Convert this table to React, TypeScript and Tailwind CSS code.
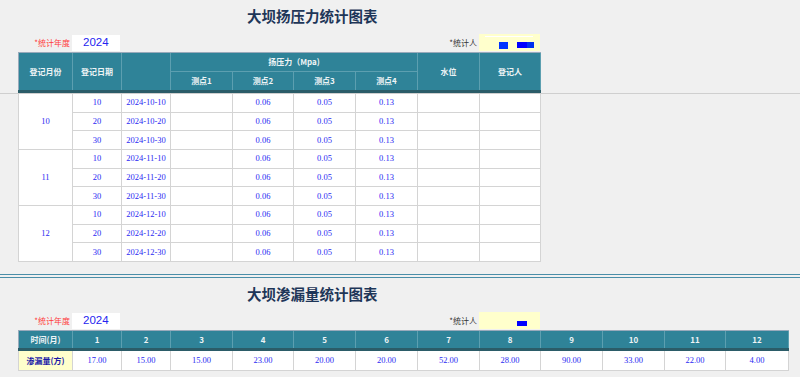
import React from "react";

const cjk = "font-['Noto_Sans_CJK_SC','Noto_Sans',sans-serif]";
const serif = "font-['Liberation_Serif','DejaVu_Serif',serif]";

const rows = [
  { m: "10", d: ["10", "20", "30"] },
  { m: "11", d: ["10", "20", "30"] },
  { m: "12", d: ["10", "20", "30"] },
];

const seep = ["17.00", "15.00", "15.00", "23.00", "20.00", "20.00", "52.00", "28.00", "90.00", "33.00", "22.00", "4.00"];

const cols1 = "grid-cols-[53px_48px_48px_61px_60px_61px_61px_61px_60px]";
const cols2 =
  "grid-cols-[53px_48px_48px_61px_60px_61px_61px_61px_60px_61px_61px_60px_62px]";

function Title({ children }: { children: React.ReactNode }) {
  return (
    <div className="flex h-[33px] items-center pl-[247px]">
      <h1 className={`${cjk} text-[14.5px] font-bold leading-none text-[#1e3658]`}>{children}</h1>
    </div>
  );
}

function FormRow({ width, marks }: { width: number; marks: "a" | "b" }) {
  return (
    <div className="flex h-[19px] items-center" style={{ width }}>
      <span className={`${cjk} w-[71px] pr-[1px] text-right text-[8px] text-[#ff3b3b]`}>*统计年度</span>
      <div className="ml-[1px] flex h-[16px] w-[48px] items-center bg-white pl-[11px] font-['Liberation_Sans',sans-serif] text-[11.5px] text-[#2424f0]">
        2024
      </div>
      <div className={`${cjk} flex-1 pr-[2px] text-right text-[8px] text-[#333]`}>*统计人</div>
      <div className="relative h-[17px] w-[61px] bg-[#ffffcc]">
        {marks === "a" ? (
          <>
            <span className="absolute left-[6px] top-[2px] h-px w-[48px] bg-white" />
            <span className="absolute left-[20px] top-[8px] h-[7px] w-[9px] bg-[#0033ff]" />
            <span className="absolute left-[38px] top-[8px] h-[6px] w-[10px] bg-[#0000ff]" />
            <span className="absolute left-[48px] top-[8px] h-[6px] w-[7px] bg-[#0030ee]" />
          </>
        ) : (
          <span className="absolute left-[38px] top-[9px] h-[5px] w-[10px] bg-[#0000ff]" />
        )}
      </div>
    </div>
  );
}

function H({ children, className = "" }: { children?: React.ReactNode; className?: string }) {
  return (
    <div className={`${cjk} flex items-center justify-center bg-[#2f8398] text-[8px] font-bold text-[#eef4f6] ${className}`}>
      {children}
    </div>
  );
}

function C({ children, className = "" }: { children?: React.ReactNode; className?: string }) {
  return (
    <div className={`${serif} flex items-center justify-center bg-white text-[8.5px] text-[#2a2af2] ${className}`}>
      {children}
    </div>
  );
}

export default function App() {
  return (
    <div className="h-[377px] w-[800px] overflow-hidden bg-[#f0f0f0]">
      {/* 扬压力 */}
      <Title>大坝扬压力统计图表</Title>
      <FormRow width={540} marks="a" />
      <div className="pl-[18px]">
        <div className={`grid w-[523px] ${cols1} grid-rows-[18px_18px] gap-px border-l border-t border-[#9ab] bg-[#5c9fb0] pr-px`}>
          <H className="row-span-2">登记月份</H>
          <H className="row-span-2">登记日期</H>
          <H className="row-span-2" />
          <H className="col-span-4">扬压力（Mpa)</H>
          <H className="row-span-2">水位</H>
          <H className="row-span-2">登记人</H>
          <H>测点1</H>
          <H>测点2</H>
          <H>测点3</H>
          <H>测点4</H>
        </div>
        <div className="h-[3px] w-[523px] bg-[#2b5c68]" />
      </div>
      <div className="h-px w-full bg-[#cfcfcf]" />
      <div className="pl-[18px]">
        <div className={`grid h-[168px] w-[523px] ${cols1} grid-rows-9 gap-px bg-[#d4d4d4] px-px pb-px`}>
          {rows.map((r) =>
            r.d.map((d, i) => (
              <React.Fragment key={r.m + d}>
                {i === 0 && <C className="row-span-3">{r.m}</C>}
                <C>{d}</C>
                <C>{`2024-${r.m}-${d}`}</C>
                <C />
                <C>0.06</C>
                <C>0.05</C>
                <C>0.13</C>
                <C />
                <C />
              </React.Fragment>
            ))
          )}
        </div>
      </div>

      <div className="mt-[12px] h-px w-full bg-[#4a8ea8]" />
      <div className="mt-[2px] h-px w-full bg-[#4a8ea8]" />

      {/* 渗漏量 */}
      <Title>大坝渗漏量统计图表</Title>
      <FormRow width={540} marks="b" />
      <div className="pl-[18px]">
        <div className={`grid h-[18px] w-[771px] ${cols2} gap-px border-l border-t border-[#9ab] bg-[#5c9fb0] pr-px`}>
          <H>时间(月)</H>
          {Array.from({ length: 12 }, (_, i) => (
            <H key={i} className="font-['Liberation_Sans',sans-serif] text-[8.5px]">
              {i + 1}
            </H>
          ))}
        </div>
        <div className="h-[3px] w-[771px] bg-[#2b5c68]" />
        <div className={`grid h-[20px] w-[771px] ${cols2} gap-px bg-[#d4d4d4] px-px pb-px`}>
          <div className={`${cjk} flex items-center justify-center bg-[#ffffcc] text-[8px] font-bold text-[#1a1aa8]`}>
            渗漏量(方)
          </div>
          {seep.map((v, i) => (
            <C key={i}>{v}</C>
          ))}
        </div>
      </div>
    </div>
  );
}
